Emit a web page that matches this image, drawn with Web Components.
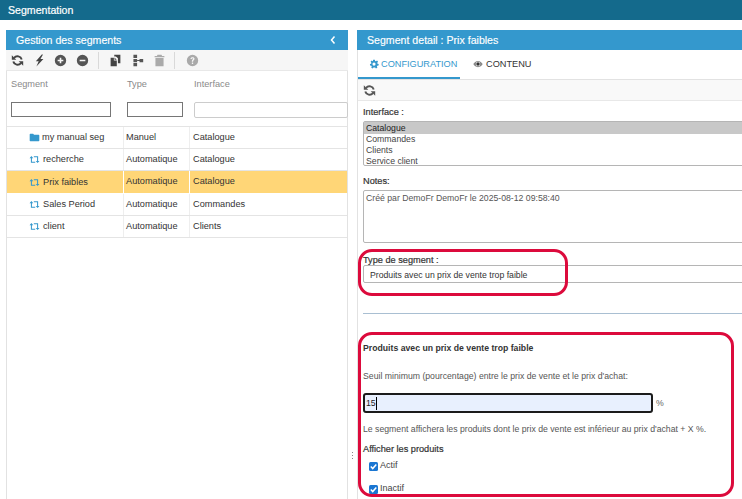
<!DOCTYPE html>
<html lang="fr">
<head>
<meta charset="utf-8">
<title>Segmentation</title>
<style>
  html, body { margin: 0; height: 100%; overflow: hidden; background: #fff; }
  body { font: 9.2px/12px "Liberation Sans", Arial, sans-serif; color: #333; }
</style>
</head>
<body>
<seg-app>
  <gestion-panel slot="left"></gestion-panel>
  <detail-panel slot="right"></detail-panel>
</seg-app>

<script>
const ICONS = {
  refresh: '<g fill="none" stroke="currentColor" stroke-width="2.4"><path d="M13.200 6.800A5.400 5.400 0 0 0 3.800 4.800"/><path d="M2.800 9.200A5.400 5.400 0 0 0 12.200 11.200"/></g><path d="M1 1.500V7h5.500zM15 14.500V9H9.500z"/>',
  bolt: '<path d="M10.800 .5 3.500 8.800H7L4.200 15.500 12.800 6.300H9.200L12.300 .5z"/>',
  plus: '<path fill-rule="evenodd" d="M8 1a7 7 0 1 1 0 14A7 7 0 0 1 8 1zM7 4.500V7H4.500v2H7v2.500h2V9h2.500V7H9V4.500z"/>',
  minus: '<path fill-rule="evenodd" d="M8 1a7 7 0 1 1 0 14A7 7 0 0 1 8 1zM4.500 7v2h7V7z"/>',
  copy: '<path d="M6.500 1H14v10.500H11V5.200L8.500 3H6.500z"/><path d="M2 4.500h4V8h3.600v7H2z"/><path d="M6.800 4.400 9.500 7.200H6.800z"/>',
  tree: '<path d="M3 1h4.500v4H3zM3 6h4.500v4H3zM3 11h4.500v4H3z"/><path d="M10.500 6H15v4h-4.500zM7.500 7.500h3v1h-3z"/>',
  trash: '<path d="M5.500 1h5l.6 1.400H14v1.500H2V2.400h2.900zM3 5h10v10H3z"/>',
  help: '<path fill-rule="evenodd" d="M8 1a7 7 0 1 1 0 14A7 7 0 0 1 8 1zM7.200 10.600v1.600h1.600v-1.600zM8 3.900c-1.400 0-2.400.8-2.500 2.100h1.500c.1-.5.4-.8 1-.8s.9.3.9.7c0 .9-1.700 1-1.700 2.900v.6h1.600v-.5c0-1.100 1.700-1.300 1.700-3 0-1.300-1-2-2.500-2z"/>',
  gear: '<path fill-rule="evenodd" d="M6.600 1h2.800l.4 2 1.300.6 1.800-1.100 1.600 2-1.300 1.600.3 1.300 2 .7-.2 2.400-2 .3-.7 1.200.8 1.900-2.300 1.100-1.300-1.600H7.200l-1.300 1.600-2.300-1.100.8-1.900-.7-1.200-2-.3-.2-2.400 2-.7.3-1.300-1.300-1.600 1.600-2 1.800 1.100L6.200 3zM8 5.600a2.500 2.500 0 1 0 0 5 2.500 2.500 0 0 0 0-5z"/>',
  eye: '<path fill-rule="evenodd" d="M8 3c3.400 0 6 2.300 7.500 5-1.500 2.700-4.100 5-7.500 5S2 10.700.5 8C2 5.300 4.600 3 8 3zm0 1.400A3.600 3.600 0 1 0 8 11.600 3.600 3.600 0 0 0 8 4.400z"/><circle cx="8" cy="8" r="2.800" fill="#333"/>',
  folder: '<path d="M1 3.500A1 1 0 0 1 2 2.500h4l1.300 1.500H14a1 1 0 0 1 1 1v7.500a1 1 0 0 1-1 1H2a1 1 0 0 1-1-1z"/>',
  retweet: '<path fill="none" stroke="currentColor" stroke-width="1.500" d="M3.500 5v7H9M12.500 11V4H7"/><path d="M.8 6 3.500 3l2.700 3zM9.800 10l2.700 3 2.700-3z"/>'
}

function icon(name, size = 12, color = 'currentColor') {
  return `<svg width="${size}" height="${size}" viewBox="0 0 16 16" fill="${color}" style="color:${color};display:block;flex:none" aria-hidden="true">${ICONS[name]}</svg>`
}

class SegApp extends HTMLElement {
  constructor() {
    super()
    this.attachShadow({ mode: 'open' }).innerHTML = `
      <style>
        :host { display: block; position: relative; height: 499px; width: 742px; overflow: hidden; }
        .bar { height: 20px; background: #146a8c; color: #fff; font-size: 10.600px; line-height: 20px; padding-left: 8px; -webkit-text-stroke: .2px #fff; }
        .main { display: flex; padding: 10px 0 0 6px; height: 469px; }
        .left { flex: none; width: 342px; }
        .split { flex: none; width: 9px; display: flex; align-items: flex-end; justify-content: center; padding-bottom: 40px; box-sizing: border-box; }
        .split i { width: 1px; height: 7px; background: repeating-linear-gradient(#888 0 1px, transparent 1px 3px); }
        .right { flex: none; width: 400px; }
      </style>
      <div class="bar">Segmentation</div>
      <div class="main">
        <div class="left"><slot name="left"></slot></div>
        <div class="split"><i></i></div>
        <div class="right"><slot name="right"></slot></div>
      </div>
      <slot></slot>
    `
  }
}
customElements.define('seg-app', SegApp)

class UiPanel extends HTMLElement {
  constructor() {
    super()
    this.attachShadow({ mode: 'open' }).innerHTML = `
      <style>
        :host { display: flex; flex-direction: column; height: 100%; }
        .head { flex: none; height: 20px; background: #3498cd; color: #fff; font-size: 10.600px; line-height: 20px; padding: 0 10px; display: flex; justify-content: space-between; align-items: center; -webkit-text-stroke: .15px #fff; }
        .body { flex: 1; border-left: 1px solid #e2e2e2; border-right: 1px solid #e2e2e2; min-height: 0; }
      </style>
      <div class="head"><span id="t"></span><slot name="tool"></slot></div>
      <div class="body"><slot></slot></div>
    `
  }

  connectedCallback() {
    this.shadowRoot.getElementById('t').textContent = this.getAttribute('heading') || ''
  }
}
customElements.define('ui-panel', UiPanel)

class SegRow extends HTMLElement {
  constructor() {
    super()
    this.attachShadow({ mode: 'open' }).innerHTML = `
      <style>
        :host { display: grid; grid-template-columns: 117px 66px 1fr; height: 22px; box-sizing: border-box; border-bottom: 1px solid #e4e4e4; line-height: 21px; color: #333; }
        :host([selected]) { background: #ffd677; border-bottom-color: #fff; height: 23px; }
        .c { padding-left: 2px; border-right: 1px solid #eee; white-space: nowrap; }
        :host([selected]) .c { border-right-color: #fff; }
        .c:last-child { border: 0; padding-left: 3px; }
        .n { display: flex; align-items: center; padding-left: 22px; gap: 3px; }
      </style>
      <div class="c n"><span id="i"></span><span id="n"></span></div>
      <div class="c" id="t"></div>
      <div class="c" id="f"></div>
    `
  }

  connectedCallback() {
    const s = this.shadowRoot
    const manual = this.getAttribute('kind') === 'Manuel'
    s.getElementById('i').innerHTML = icon(manual ? 'folder' : 'retweet', 11, '#3498cd')
    if (manual) s.getElementById('i').style.marginRight = '-1px'
    s.getElementById('n').textContent = this.getAttribute('name')
    s.getElementById('t').textContent = this.getAttribute('kind')
    s.getElementById('f').textContent = this.getAttribute('iface')
  }
}
customElements.define('seg-row', SegRow)

class GestionPanel extends HTMLElement {
  constructor() {
    super()
    const tb = (n, c) => `<span class="b">${icon(n, 13, c)}</span>`
    this.attachShadow({ mode: 'open' }).innerHTML = `
      <style>
        :host { display: block; height: 100%; }
        .tools { height: 21px; background: #f6f6f6; display: flex; align-items: center; margin: 0 -1px; border-bottom: 1px solid #e8e8e8; box-sizing: border-box; }
        .b { width: 22px; display: flex; justify-content: center; flex: none; }
        .sep { width: 1px; height: 17px; background: #d9d9d9; margin: 0 5px 0 4px; flex: none; }
        .heads, .filters { display: grid; grid-template-columns: 116px 67px 1fr; padding-left: 4px; }
        .heads { height: 31px; line-height: 27px; color: #8a8a8a; }
        .filters { height: 24px; }
        .filters input { box-sizing: border-box; height: 15px; padding: 0; margin: 0; background: #fff; border: 1px solid #767676; font: inherit; outline: 0; }
        .filters .a { width: 100px; }
        .filters .b2 { width: 56px; }
        .filters .c2 { width: calc(100% + 1px); border-color: #ccc; border-radius: 2px; height: 16px; }
        .rows { border-top: 1px solid #e4e4e4; }
      </style>
      <ui-panel heading="Gestion des segments">
        <svg slot="tool" width="8" height="10" viewBox="0 0 8 10" style="display:block;margin-right:1px"><path d="M5.500 1.500 2.500 5l3 3.500" fill="none" stroke="#fff" stroke-width="1.500"/></svg>
        <div class="tools">
          ${tb('refresh', '#444')}${tb('bolt', '#444')}
          <span class="b" style="margin-left:-1px">${icon('plus', 13, '#555')}</span>
          <span class="b" style="margin-right:1px">${icon('minus', 13, '#555')}</span>
          <span class="sep"></span>
          ${tb('copy', '#444')}${tb('tree', '#555')}${tb('trash', '#aaa')}
          <span class="sep"></span>
          <span class="b" style="margin-left:1px">${icon('help', 13, '#aaa')}</span>
        </div>
        <div class="heads"><span>Segment</span><span>Type</span><span>Interface</span></div>
        <div class="filters"><input class="a"><input class="b2"><input class="c2"></div>
        <div class="rows">
          <seg-row name="my manual seg" kind="Manuel" iface="Catalogue"></seg-row>
          <seg-row name="recherche" kind="Automatique" iface="Catalogue"></seg-row>
          <seg-row name="Prix faibles" kind="Automatique" iface="Catalogue" selected></seg-row>
          <seg-row name="Sales Period" kind="Automatique" iface="Commandes"></seg-row>
          <seg-row name="client" kind="Automatique" iface="Clients"></seg-row>
        </div>
      </ui-panel>
    `
  }
}
customElements.define('gestion-panel', GestionPanel)

class CheckLine extends HTMLElement {
  constructor() {
    super()
    this.attachShadow({ mode: 'open' }).innerHTML = `
      <style>
        :host { display: flex; align-items: center; gap: 2px; padding-left: 6px; height: 12px; color: #444; font-size: 9px; }
        .box { width: 9px; height: 9px; border-radius: 1.500px; background: #1a76d2; flex: none; display: block; margin-top: 2px; }
      </style>
      <svg class="box" viewBox="0 0 9 9"><path d="M1.800 4.600 3.700 6.600 7.300 2.400" fill="none" stroke="#fff" stroke-width="1.500"/></svg>
      <span><slot></slot></span>
    `
  }
}
customElements.define('check-line', CheckLine)

class DetailPanel extends HTMLElement {
  constructor() {
    super()
    this.attachShadow({ mode: 'open' }).innerHTML = `
      <style>
        :host { display: block; height: 100%; }
        .tabs { height: 30px; display: flex; border-bottom: 1px solid #e2e2e2; box-sizing: border-box; }
        .tab { display: flex; align-items: center; gap: 2px; height: 29px; box-sizing: border-box; padding: 0 2px 0 11px; }
        .tab.on { color: #3498cd; border-bottom: 2px solid #3498cd; width: 102px; }
        .tab.off { color: #333; padding: 0 2px 1px 13px; gap: 3px; }
        .tools { height: 21px; background: #f9f9f9; border-bottom: 1px solid #e8e8e8; box-sizing: border-box; display: flex; align-items: center; padding-left: 5px; }
        form { display: block; padding: 5px 0 0 5px; font-size: 8.700px; }
        label, .lbl { display: block; line-height: 12px; color: #333; font-size: 9.200px; -webkit-text-stroke: .2px #333; }
        .list, .notes, .sel { box-sizing: border-box; border: 1px solid #b5b5b5; border-radius: 2px; width: 400px; background: #fff; }
        .list { height: 45px; margin-top: 3px; line-height: 11px; color: #444; }
        .list div { padding-left: 2px; height: 11px; }
        .list .on { background: #c8c8c8; color: #222; height: 12px; line-height: 12px; }
        .notes { height: 53px; margin-top: 3px; padding: 1px 2px; color: #555; }
        .sel { height: 18px; padding-left: 6px; line-height: 18px; color: #333; }
        .rule { height: 1px; background: #a9bfd2; margin-top: 30px; width: 400px; }
        .t { margin-top: 28px; font-weight: bold; color: #333; height: 12px; }
        .p { height: 12px; white-space: nowrap; color: #555; }
        .num { display: flex; align-items: center; gap: 3px; margin-top: 11px; height: 20px; color: #666; }
        .num div { box-sizing: border-box; width: 290px; height: 20px; border: 2px solid #1b1b1b; border-radius: 3px; background: #e8f0fe; color: #222; padding-left: 1px; display: flex; align-items: center; }
        .num i { width: 1px; height: 13px; background: #000; }
      </style>
      <ui-panel heading="Segment detail : Prix faibles">
        <div class="tabs">
          <div class="tab on">${icon('gear', 10, '#3498cd')}<span>CONFIGURATION</span></div>
          <div class="tab off">${icon('eye', 10, '#888')}<span>CONTENU</span></div>
        </div>
        <div class="tools">${icon('refresh', 13, '#555')}</div>
        <form onsubmit="return false">
          <label>Interface :</label>
          <div class="list">
            <div class="on">Catalogue</div><div>Commandes</div><div>Clients</div><div>Service client</div>
          </div>
          <label style="margin-top:9px">Notes:</label>
          <div class="notes">Créé par DemoFr DemoFr le 2025-08-12 09:58:40</div>
          <label style="margin-top:11px;height:11px">Type de segment :</label>
          <div class="sel">Produits avec un prix de vente trop faible</div>
          <div class="rule"></div>
          <div class="t">Produits avec un prix de vente trop faible</div>
          <div class="p" style="margin-top:16px">Seuil minimum (pourcentage) entre le prix de vente et le prix d'achat:</div>
          <div class="num"><div>15<i></i></div><span>%</span></div>
          <div class="p" style="margin-top:10px">Le segment affichera les produits dont le prix de vente est inférieur au prix d'achat + X %.</div>
          <div class="lbl" style="margin-top:8px">Afficher les produits</div>
          <check-line style="margin-top:4px">Actif</check-line>
          <check-line style="margin-top:11px">Inactif</check-line>
        </form>
      </ui-panel>
    `
  }
}
customElements.define('detail-panel', DetailPanel)

// red annotations drawn over the screenshot content
class RedMark extends HTMLElement {
  constructor() {
    super()
    this.attachShadow({ mode: 'open' }).innerHTML = `
      <style>
        :host { display: block; position: absolute; box-sizing: border-box; border: 3px solid #dc0a3c; border-radius: 14px; pointer-events: none; }
      </style>
    `
  }
}
customElements.define('red-mark', RedMark)

const app = document.querySelector('seg-app')
for (const [l, t, w, h] of [[358, 249, 210, 47], [358, 332, 376, 165]]) {
  const m = document.createElement('red-mark')
  m.style.cssText = `left:${l}px;top:${t}px;width:${w}px;height:${h}px`
  app.appendChild(m)
}
</script>
</body>
</html>
